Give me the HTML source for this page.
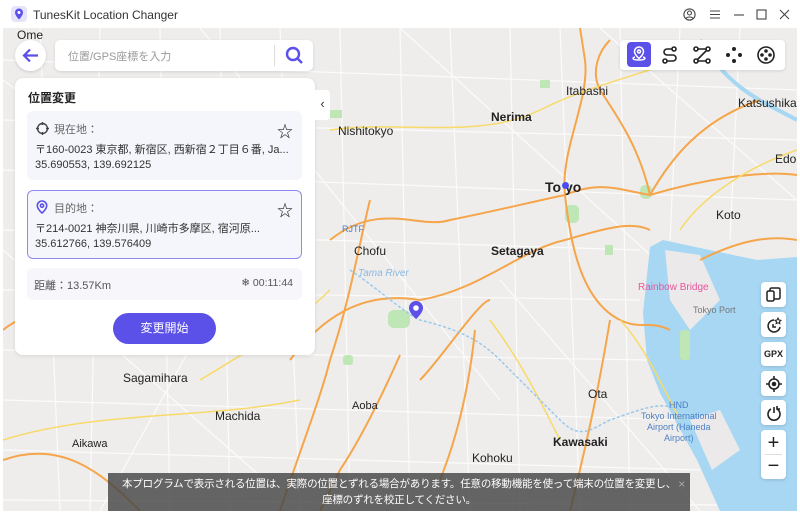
<!DOCTYPE html>
<html><head><meta charset="utf-8"><style>
*{margin:0;padding:0;box-sizing:border-box}
body{width:800px;height:514px;overflow:hidden;font-family:"Liberation Sans","Noto Sans CJK JP",sans-serif;background:#fff;position:relative}
.title{position:absolute;left:0;top:0;width:800px;height:28px;background:#fff;font-size:12px;color:#333}
.map{position:absolute;left:3px;top:28px;width:794px;height:483px;overflow:hidden;background:#efedec}
.panel{position:absolute;left:15px;top:78px;width:300px;height:277px;background:#fff;border-radius:8px;box-shadow:0 1px 4px rgba(0,0,0,.1)}
.card{position:absolute;left:12px;width:275px;background:#f5f6fb;border-radius:6px;font-size:11px;color:#333}
.btn{position:absolute;background:#fff;border-radius:4px;box-shadow:0 1px 3px rgba(0,0,0,.15);display:flex;align-items:center;justify-content:center}
.lbl{position:absolute;font-size:12px;color:#222}
.b{font-weight:bold}
</style></head><body>
<div class="title">
<svg style="position:absolute;left:11px;top:6px" width="16" height="16" viewBox="0 0 16 16"><rect width="16" height="16" rx="4" fill="#e6e4fb"/><path d="M8 2.5a4 4 0 0 0-4 4c0 3 4 7 4 7s4-4 4-7a4 4 0 0 0-4-4z" fill="#5b50e8"/><circle cx="8" cy="6.5" r="1.5" fill="#fff"/></svg>
<span style="position:absolute;left:33px;top:8px">TunesKit Location Changer</span>
<svg style="position:absolute;left:683px;top:8px" width="13" height="13" viewBox="0 0 13 13" fill="none" stroke="#444" stroke-width="1.1"><circle cx="6.5" cy="6.5" r="5.6"/><circle cx="6.5" cy="5" r="2"/><path d="M2.8 10.5c1.5-2 5.9-2 7.4 0"/></svg>
<svg style="position:absolute;left:709px;top:9px" width="12" height="11" stroke="#444" stroke-width="1.1"><path d="M1 2h10M1 5.5h10M1 9h10"/></svg>
<svg style="position:absolute;left:733px;top:9px" width="12" height="11" stroke="#444" stroke-width="1.1"><path d="M1 6h10"/></svg>
<svg style="position:absolute;left:756px;top:9px" width="11" height="11" fill="none" stroke="#444" stroke-width="1.1"><rect x="1" y="1" width="9" height="9"/></svg>
<svg style="position:absolute;left:779px;top:9px" width="11" height="11" stroke="#444" stroke-width="1.1"><path d="M1 1l9 9M10 1l-9 9"/></svg>
</div>
<div class="map">
<svg width="794" height="483" viewBox="3 28 794 483" style="position:absolute;left:0;top:0">
<g fill="none" stroke="#fbfbfb" stroke-width="1.2">
<path d="M3 60 L797 90 M3 120 L797 140 M3 170 L797 200 M3 230 L640 250 M3 290 L640 300 M3 350 L650 360 M3 400 L690 420 M3 450 L700 470 M3 500 L720 505"/>
<path d="M40 28 L60 511 M100 28 L90 511 M160 28 L170 511 M220 28 L230 511 M280 28 L300 511 M340 28 L350 511 M400 28 L410 511 M450 28 L470 511 M510 28 L520 511 M560 28 L580 511 M620 28 L630 511 M680 28 L670 240 M740 28 L730 240"/>
<path d="M3 80 L300 300 M200 28 L500 400 M400 28 L700 300 M3 250 L300 511 M500 280 L700 511 M600 28 L797 200 M300 150 L100 511"/>
</g>
<path d="M650 247 L663 240 L700 248 L757 260 L797 257 L797 511 L720 511 L697 460 L660 393 L647 360 L643 313 Z" fill="#a7d7f3"/>
<path d="M665 250 L700 255 L720 300 L690 330 L670 300Z M690 420 L720 410 L740 450 L712 470Z" fill="#ece9ea"/>
<path d="M700 40 C730 90 760 100 797 120" fill="none" stroke="#a7d7f3" stroke-width="4"/>
<g fill="#bfe6b5"><rect x="640" y="185" width="12" height="14" rx="5"/><rect x="565" y="205" width="14" height="18" rx="5"/><rect x="388" y="310" width="22" height="18" rx="6"/><rect x="15" y="330" width="12" height="14" rx="4"/><rect x="50" y="140" width="16" height="10" rx="4"/><rect x="343" y="355" width="10" height="10" rx="3"/><rect x="605" y="245" width="8" height="10"/><rect x="680" y="330" width="10" height="30" rx="3"/><rect x="330" y="110" width="12" height="8"/><rect x="540" y="80" width="10" height="8"/></g>
<g fill="none" stroke="#f5a54a" stroke-width="2">
<path d="M330 240 C380 200 420 230 450 220 C500 210 540 200 565 195 C600 180 620 190 650 195"/>
<path d="M565 195 C560 150 590 100 585 60 L580 28"/>
<path d="M565 195 C570 240 580 300 620 320 C640 330 650 320 670 330"/>
<path d="M290 360 C320 320 360 290 420 300 C480 290 520 250 565 240 C600 230 630 220 650 230"/>
<path d="M400 355 C380 400 360 440 340 470 L320 511"/>
<path d="M420 380 C440 360 480 300 490 300"/>
<path d="M650 195 C640 150 620 120 600 90 C590 70 600 50 610 40"/>
<path d="M650 195 C700 180 760 170 797 175"/>
<path d="M700 260 C740 240 770 235 797 240"/>
<path d="M610 320 C600 380 590 430 570 511"/>
<path d="M475 330 C470 380 460 430 440 480"/>
<path d="M370 200 C360 240 350 300 330 360 C320 400 300 450 280 511"/>
<path d="M3 460 C60 440 100 470 140 511"/>
<path d="M3 330 C40 300 80 320 120 300"/>
<path d="M155 95 C140 130 130 160 135 200"/>
<path d="M650 195 C670 160 700 120 760 100"/>
</g>
<g fill="none" stroke="#f7da6a" stroke-width="1.5">
<path d="M330 130 C400 120 480 140 540 110 C580 90 620 80 680 60"/>
<path d="M490 320 C520 360 540 400 560 440"/>
<path d="M200 380 C250 350 300 320 330 290"/>
<path d="M620 320 C640 340 660 380 680 420"/>
<path d="M3 440 C100 410 200 420 300 400"/>
<path d="M680 230 C700 200 740 170 797 150"/>
</g>
<path d="M350 270 C380 290 400 310 420 320 C460 330 480 340 500 360 C520 380 540 400 560 420 C580 440 590 430 610 420 C640 410 660 400 680 410" fill="none" stroke="#9ac8ea" stroke-width="1.5" stroke-dasharray="3 2"/>
</svg>
<div class="lbl" style="left:14px;top:0px">Ome</div>
<div class="lbl" style="left:563px;top:56px">Itabashi</div>
<div class="lbl b" style="left:488px;top:82px">Nerima</div>
<div class="lbl" style="left:735px;top:68px">Katsushika</div>
<div class="lbl" style="left:335px;top:96px">Nishitokyo</div>
<div class="lbl b" style="left:542px;top:151px;font-size:14px">To yo</div>
<div class="lbl" style="left:772px;top:124px">Edo</div>
<div class="lbl" style="left:713px;top:180px">Koto</div>
<div class="lbl" style="left:351px;top:216px">Chofu</div>
<div class="lbl b" style="left:488px;top:216px">Setagaya</div>
<div class="lbl" style="left:120px;top:343px">Sagamihara</div>
<div class="lbl" style="left:212px;top:381px">Machida</div>
<div class="lbl" style="left:69px;top:410px;font-size:11px">Aikawa</div>
<div class="lbl" style="left:349px;top:372px;font-size:11px">Aoba</div>
<div class="lbl" style="left:585px;top:359px">Ota</div>
<div class="lbl b" style="left:550px;top:407px">Kawasaki</div>
<div class="lbl" style="left:469px;top:423px">Kohoku</div>
<div style="position:absolute;left:355px;top:240px;font-size:10px;color:#8bb8e0;font-style:italic">Tama River</div>
<div style="position:absolute;left:635px;top:254px;font-size:10px;color:#e7559b">Rainbow Bridge</div>
<div style="position:absolute;left:690px;top:277px;font-size:9px;color:#777">Tokyo Port</div>
<div style="position:absolute;left:638px;top:372px;font-size:9px;color:#4d7fc4;text-align:center;line-height:11px">HND<br>Tokyo International<br>Airport (Haneda<br>Airport)</div>
<div style="position:absolute;left:339px;top:196px;font-size:9px;color:#4d7fc4">RJTF</div>
<div style="position:absolute;left:559px;top:154px;width:7px;height:7px;border-radius:50%;background:#4a4cf0"></div>
<svg style="position:absolute;left:405px;top:272px" width="16" height="20" viewBox="0 0 16 20"><path d="M8 1a7 7 0 0 0-7 7c0 5 7 11 7 11s7-6 7-11a7 7 0 0 0-7-7z" fill="#5b50e8"/><circle cx="8" cy="8" r="2.8" fill="#fff"/></svg>
</div>
<div style="position:absolute;left:15px;top:40px;width:31px;height:31px;border-radius:50%;background:#fff;box-shadow:0 1px 3px rgba(0,0,0,.15)"><svg style="position:absolute;left:7px;top:8px" width="17" height="15" fill="none" stroke="#5b50e8" stroke-width="2.2"><path d="M16 7.5H2M8 1.5L2 7.5l6 6"/></svg></div>
<div style="position:absolute;left:55px;top:40px;width:258px;height:31px;background:#fff;border-radius:5px;box-shadow:0 1px 3px rgba(0,0,0,.12)">
<span style="position:absolute;left:13px;top:8px;font-size:11px;color:#999">位置/GPS座標を入力</span>
<div style="position:absolute;left:219px;top:5px;width:1px;height:21px;background:#ddd"></div>
<svg style="position:absolute;left:230px;top:6px" width="19" height="19" fill="none" stroke="#5b50e8" stroke-width="2.4"><circle cx="8" cy="8" r="6"/><path d="M12.5 12.5L17 17"/></svg></div>
<div style="position:absolute;left:620px;top:40px;width:165px;height:30px;background:#fff;border-radius:4px;box-shadow:0 1px 3px rgba(0,0,0,.12)">
<div style="position:absolute;left:7px;top:2px;width:24px;height:25px;background:#5b50e8;border-radius:4px"><svg width="24" height="25" fill="none" stroke="#fff" stroke-width="1.5"><path d="M12 5a4.5 4.5 0 0 0-4.5 4.5c0 3 4.5 7 4.5 7s4.5-4 4.5-7A4.5 4.5 0 0 0 12 5z"/><circle cx="12" cy="9.5" r="1.5"/><path d="M8 15c-3 .8-3 3 4 3s7-2.2 4-3"/></svg></div>
<svg style="position:absolute;left:40px;top:5px" width="20" height="20" fill="none" stroke="#222" stroke-width="1.6"><circle cx="14" cy="4" r="2"/><circle cx="5" cy="16" r="2"/><path d="M12 4H7a3 3 0 0 0 0 6h6a3 3 0 0 1 0 6H7"/></svg>
<svg style="position:absolute;left:72px;top:5px" width="20" height="20" fill="none" stroke="#222" stroke-width="1.6"><circle cx="4" cy="4" r="2"/><circle cx="16" cy="4" r="2"/><circle cx="4" cy="16" r="2"/><circle cx="16" cy="16" r="2"/><path d="M6 4h8M14.5 5.5L5.5 14.5M6 16h8"/></svg>
<svg style="position:absolute;left:104px;top:5px" width="20" height="20" fill="#222"><circle cx="10" cy="4" r="2"/><circle cx="4" cy="10" r="2"/><circle cx="16" cy="10" r="2"/><circle cx="10" cy="16" r="2"/></svg>
<svg style="position:absolute;left:136px;top:5px" width="20" height="20" fill="none" stroke="#222" stroke-width="1.6"><circle cx="10" cy="10" r="8"/><circle cx="10" cy="6" r="1" fill="#222"/><circle cx="6" cy="10" r="1" fill="#222"/><circle cx="14" cy="10" r="1" fill="#222"/><circle cx="10" cy="14" r="1" fill="#222"/></svg>
</div>
<div class="panel">
<div style="position:absolute;left:13px;top:11px;font-size:12px;font-weight:bold;color:#222">位置変更</div>
<div class="card" style="top:33px;height:69px">
<svg style="position:absolute;left:9px;top:11px" width="13" height="13" fill="none" stroke="#444" stroke-width="1.4"><circle cx="6.5" cy="6.5" r="5"/><path d="M6.5 0v3M6.5 10v3M0 6.5h3M10 6.5h3"/></svg>
<span style="position:absolute;left:27px;top:10px;color:#666">現在地：</span>
<span style="position:absolute;right:9px;top:7px;font-size:16px;color:#222">☆</span>
<div style="position:absolute;left:8px;top:30px;white-space:nowrap">〒160-0023 東京都, 新宿区, 西新宿２丁目６番, Ja...</div>
<div style="position:absolute;left:8px;top:48px">35.690553, 139.692125</div>
</div>
<div class="card" style="top:112px;height:69px;border:1.5px solid #8f89ef">
<svg style="position:absolute;left:8px;top:9px" width="12" height="14" fill="none" stroke="#5b50e8" stroke-width="1.6"><path d="M6 1a4.7 4.7 0 0 0-4.7 4.7C1.3 9 6 13 6 13s4.7-4 4.7-7.3A4.7 4.7 0 0 0 6 1z"/><circle cx="6" cy="5.7" r="1.6"/></svg>
<span style="position:absolute;left:26px;top:9px;color:#666">目的地：</span>
<span style="position:absolute;right:8px;top:6px;font-size:16px;color:#222">☆</span>
<div style="position:absolute;left:7px;top:29px;white-space:nowrap">〒214-0021 神奈川県, 川崎市多摩区, 宿河原...</div>
<div style="position:absolute;left:7px;top:47px">35.612766, 139.576409</div>
</div>
<div class="card" style="top:190px;height:32px;background:#f7f7fb">
<span style="position:absolute;left:7px;top:9px;color:#555">距離：13.57Km</span>
<span style="position:absolute;right:9px;top:9px;font-size:10.5px;color:#555">❄ 00:11:44</span>
</div>
<div style="position:absolute;left:98px;top:235px;width:103px;height:31px;background:#5b50e8;border-radius:16px;color:#fff;font-size:12px;text-align:center;line-height:31px">変更開始</div>
</div>
<div style="position:absolute;left:315px;top:90px;width:15px;height:30px;background:#fff;border-radius:0 4px 4px 0;font-size:13px;line-height:28px;text-align:center;color:#333">‹</div>
<div class="btn" style="left:761px;top:282px;width:25px;height:25px"><svg width="15" height="15" fill="none" stroke="#222" stroke-width="1.5"><rect x="4" y="1" width="10" height="11" rx="1.5"/><rect x="1" y="4" width="7" height="10" rx="1.5" fill="#fff"/></svg></div>
<div class="btn" style="left:761px;top:312px;width:25px;height:25px"><svg width="16" height="16" fill="none" stroke="#222" stroke-width="1.5"><path d="M8 3a6 6 0 1 0 6 7"/><path d="M7 7v3h3"/><path d="M12 1l1 2 2 .3-1.5 1.4.4 2-1.9-1-1.9 1 .4-2L9 3.3l2-.3z" stroke-width="1"/></svg></div>
<div class="btn" style="left:761px;top:342px;width:25px;height:24px;font-size:9px;font-weight:bold;color:#222">GPX</div>
<div class="btn" style="left:761px;top:371px;width:25px;height:25px"><svg width="16" height="16" fill="none" stroke="#222" stroke-width="1.6"><circle cx="8" cy="8" r="5"/><circle cx="8" cy="8" r="1.5" fill="#222"/><path d="M8 0v3M8 13v3M0 8h3M13 8h3"/></svg></div>
<div class="btn" style="left:761px;top:400px;width:25px;height:25px"><svg width="16" height="16" fill="none" stroke="#222" stroke-width="1.6"><path d="M5 4a6 6 0 1 0 6 0"/><path d="M8 2v6"/><path d="M11 1v3h3"/></svg></div>
<div class="btn" style="left:761px;top:430px;width:25px;height:49px;flex-direction:column;font-size:20px;color:#222;line-height:22px"><span>+</span><div style="width:17px;height:1px;background:#ddd"></div><span>−</span></div>
<div style="position:absolute;left:108px;top:473px;width:582px;height:38px;background:rgba(70,70,70,.82);color:#fff;font-size:10.5px;text-align:center;line-height:16px;padding-top:3px;white-space:nowrap;letter-spacing:-0.2px">本プログラムで表示される位置は、実際の位置とずれる場合があります。任意の移動機能を使って端末の位置を変更し、<br>座標のずれを校正してください。<span style="position:absolute;right:5px;top:3px;color:#aaa;font-size:12px">×</span></div>
</body></html>
